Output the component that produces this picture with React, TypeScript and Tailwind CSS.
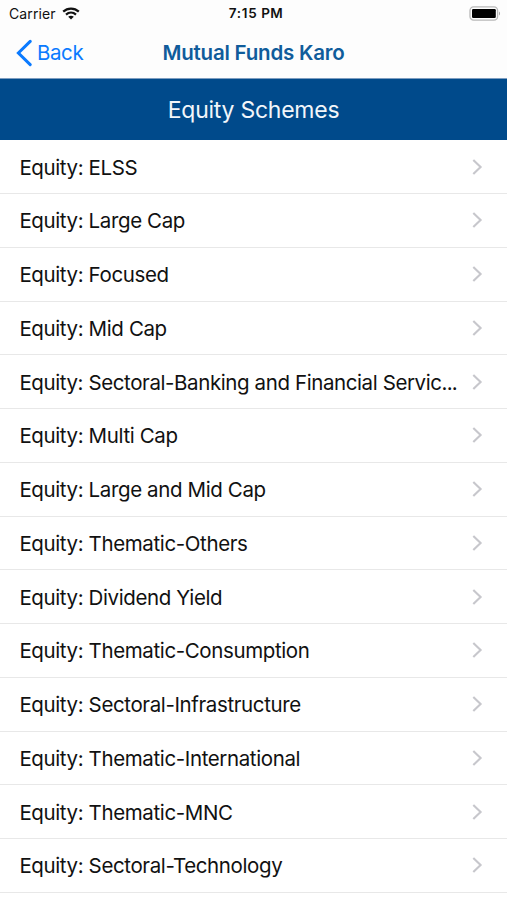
import { clsx } from 'clsx';

const SCHEMES = [
  'Equity: ELSS',
  'Equity: Large Cap',
  'Equity: Focused',
  'Equity: Mid Cap',
  'Equity: Sectoral-Banking and Financial Servic...',
  'Equity: Multi Cap',
  'Equity: Large and Mid Cap',
  'Equity: Thematic-Others',
  'Equity: Dividend Yield',
  'Equity: Thematic-Consumption',
  'Equity: Sectoral-Infrastructure',
  'Equity: Thematic-International',
  'Equity: Thematic-MNC',
  'Equity: Sectoral-Technology',
];

function WifiIcon() {
  return (
    <svg width="18" height="13" viewBox="0 0 18 13" fill="none" stroke="#111" strokeWidth="2.2">
      <path d="M1.2 4.6C5.6 0.5 12.4 0.5 16.8 4.6" />
      <path d="M4 7.6C6.9 5 11.1 5 14 7.6" />
      <path d="M6.2 9.7C7.8 8.3 10.2 8.3 11.8 9.7L9 12.4Z" fill="#111" stroke="none" />
    </svg>
  );
}

function BatteryIcon() {
  return (
    <svg width="33" height="15" viewBox="0 0 33 15" fill="none">
      <rect x="1" y="0.9" width="27.6" height="13.2" rx="3.6" stroke="#b8b8b8" strokeWidth="1.3" />
      <rect x="3" y="3" width="23.8" height="9" rx="1.2" fill="#000" />
      <path d="M30 5.5C31.4 6.2 31.4 8.8 30 9.5Z" fill="#a9a9a9" />
    </svg>
  );
}

function StatusBar() {
  return (
    <div className="grid h-[27px] grid-cols-[1fr_auto_1fr] items-center pl-[9px] pr-[5px] text-[#111]">
      <div className="flex items-center gap-[6px]">
        <span className="text-[14px] leading-none tracking-[0.1px]">Carrier</span>
        <WifiIcon />
      </div>
      <span className="pl-px pt-px text-center text-[13.5px] font-semibold leading-none tracking-[0.7px]">
        7:15<span className="tracking-[0.4px]"> PM</span>
      </span>
      <div className="flex justify-end">
        <BatteryIcon />
      </div>
    </div>
  );
}

function NavBar() {
  return (
    <div className="grid h-[52px] grid-cols-[1fr_auto_1fr] items-center border-b border-[#7d9dc0] px-4">
      <button className="flex items-center gap-[5px] text-[#0a7aff]">
        <svg width="16" height="28" viewBox="0 0 16 28" fill="none" stroke="currentColor" strokeWidth="3">
          <path d="M14.2 2.4L2.4 14L14.2 25.6" strokeLinecap="round" />
        </svg>
        <span className="pt-px text-[20.5px] leading-6 tracking-[-0.4px]">Back</span>
      </button>
      <h1 className="pt-px text-[20.5px] font-semibold leading-6 tracking-[-0.21px] text-[#105c9b]">
        Mutual Funds Karo
      </h1>
      <span />
    </div>
  );
}

function SchemeRow({ name }: { name: string }) {
  const truncated = name.endsWith('...');
  const label = truncated ? name.slice(0, -3) : name;

  return (
    <li className="flex h-[53.75px] items-center border-b border-[#e8e8e8] pl-[19.4px] pr-6">
      <span
        className={clsx(
          'whitespace-nowrap pt-[2px] text-[20.5px] leading-7 text-[#111]',
          truncated ? 'tracking-[-0.4px]' : 'tracking-[-0.38px]',
        )}>
        {label}
        {truncated && <span className="tracking-[-0.8px]">...</span>}
      </span>
      <svg
        className="ml-auto"
        width="12"
        height="18"
        viewBox="0 0 12 18"
        fill="none"
        stroke="#c7c7cc"
        strokeWidth="2.1">
        <path d="M2.3 1.9L9.6 9L2.3 16.1" />
      </svg>
    </li>
  );
}

export default function App() {
  return (
    <div className="h-[900px] w-[507px] overflow-hidden bg-white font-['Inter',sans-serif]">
      <div className="bg-[#fdfdfd]">
        <StatusBar />
        <NavBar />
      </div>
      <h2 className="flex h-[61px] items-center justify-center bg-[#004a8b] pt-px text-[23px] leading-7 tracking-[-0.25px] text-[#f2f6fa]">
        Equity Schemes
      </h2>
      <ul className="pt-[0.3px]">
        {SCHEMES.map((name) => (
          <SchemeRow key={name} name={name} />
        ))}
      </ul>
    </div>
  );
}
